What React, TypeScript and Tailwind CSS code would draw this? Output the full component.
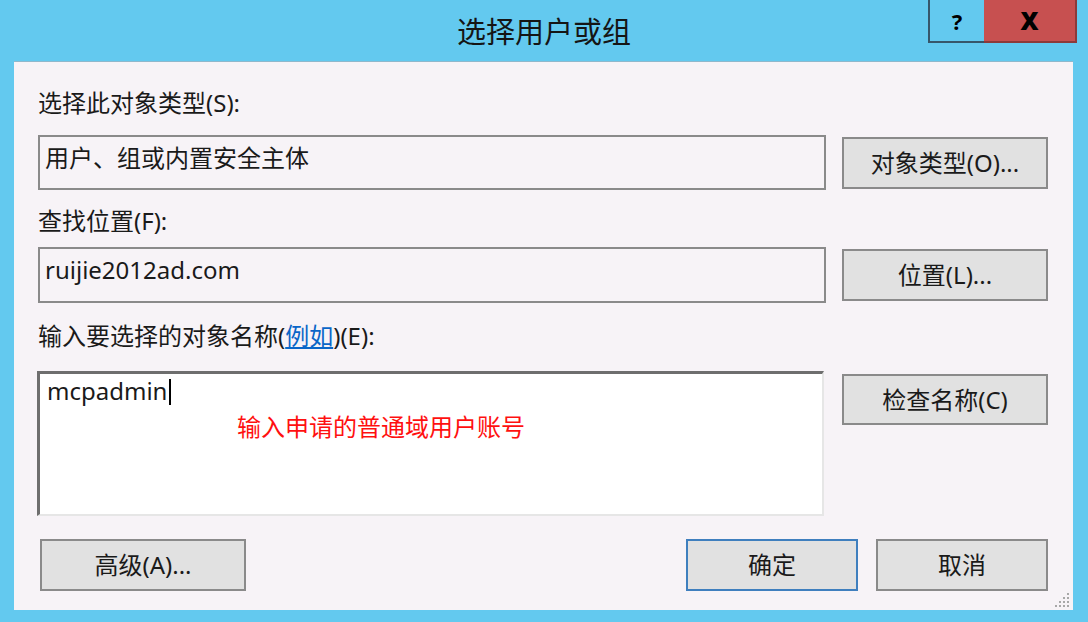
import React from "react";

const font = { fontFamily: '"Noto Sans", "Noto Sans CJK SC", sans-serif' };

function Btn({ children, primary = false, className = "" }: { children: React.ReactNode; primary?: boolean; className?: string }) {
  return (
    <div
      className={
        "flex items-center justify-center bg-[#e1e1e1] text-[24px] text-[#1a1a1a] border-2 " +
        (primary ? "border-[#3f7fbe] " : "border-[#8a8a8a] ") +
        className
      }
    >
      {children}
    </div>
  );
}

export default function App() {
  return (
    <div className="w-[1088px] h-[622px] bg-[#63c9ef] flex flex-col overflow-hidden" style={font}>
      {/* title bar */}
      <div className="relative h-[61px] shrink-0 flex items-center justify-center">
        <div className="text-[29px] text-[#151515] leading-none mt-[2px]">选择用户或组</div>
        <div className="absolute top-0 right-[11px] flex">
          <div className="w-[56px] h-[43px] border-l-2 border-b-2 border-[#36566a] flex items-center justify-center text-[22px] font-bold text-black leading-none">?</div>
          <div className="w-[93px] h-[43px] bg-[#c75050] border-r-2 border-b-2 border-[#8c3a3a] flex items-center justify-center text-[25px] font-black text-black leading-none">X</div>
        </div>
      </div>
      {/* client area */}
      <div className="relative ml-[14px] mr-[15px] h-[549px] bg-[#f7f3f7] border-t border-[#8fb8cc] pl-[24px] pr-[25px]">
        <div className="flex flex-col">
          <div className="mt-[27px] h-[28px] leading-[28px] text-[24px] text-[#1a1a1a]">选择此对象类型(S):</div>
          <div className="mt-[18px] flex gap-[16px] items-start">
            <div className="w-[788px] h-[55px] border-2 border-[#8a8a8a] bg-[#f7f3f7] px-[5px] pt-[6px] text-[24px] leading-[30px] text-[#1a1a1a]">
              用户、组或内置安全主体
            </div>
            <Btn className="mt-[2px] w-[206px] h-[52px]">对象类型(O)...</Btn>
          </div>
          <div className="mt-[17px] h-[28px] leading-[28px] text-[24px] text-[#1a1a1a]">查找位置(F):</div>
          <div className="mt-[12px] flex gap-[16px] items-start">
            <div className="w-[788px] h-[56px] border-2 border-[#8a8a8a] bg-[#f7f3f7] px-[5px] pt-[6px] text-[24px] leading-[30px] text-[#1a1a1a]">
              ruijie2012ad.com
            </div>
            <Btn className="mt-[2px] w-[206px] h-[52px]">位置(L)...</Btn>
          </div>
          <div className="mt-[19px] h-[28px] leading-[28px] text-[24px] text-[#1a1a1a]">
            输入要选择的对象名称(<span className="text-[#0a66c8] underline">例如</span>)(E):
          </div>
          <div className="mt-[21px] flex gap-[18px] items-start">
            <div className="relative w-[787px] h-[145px] -ml-[1px] bg-white border-t-[3px] border-l-[3px] border-r-2 border-b-2 border-t-[#6e6e6e] border-l-[#6e6e6e] border-r-[#e6e6e6] border-b-[#e6e6e6] pl-[7px] pt-[2px] text-[24px] leading-[30px] text-[#1a1a1a]">
              <span>mcpadmin</span>
              <span className="inline-block w-[2px] h-[26px] bg-black align-middle ml-[2px] -mt-[4px]"></span>
              <div className="absolute left-[197px] top-[38px] text-[24px] leading-[30px] text-[#ff1010]">输入申请的普通域用户账号</div>
            </div>
            <Btn className="mt-[3px] w-[206px] h-[51px]">检查名称(C)</Btn>
          </div>
          <div className="mt-[23px] flex items-start">
            <Btn className="ml-[2px] w-[206px] h-[52px]">高级(A)...</Btn>
            <div className="flex-1" />
            <Btn primary className="w-[172px] h-[52px]">确定</Btn>
            <Btn className="ml-[18px] w-[172px] h-[52px]">取消</Btn>
          </div>
        </div>
        {/* resize grip */}
        <svg className="absolute right-[3px] bottom-[3px]" width="16" height="16" viewBox="0 0 16 16">
          {[
            [13, 2],
            [9, 6], [13, 6],
            [5, 10], [9, 10], [13, 10],
            [1, 14], [5, 14], [9, 14], [13, 14],
          ].map(([x, y], i) => (
            <rect key={i} x={x} y={y} width="2" height="2" fill="#a8a8a8" />
          ))}
        </svg>
      </div>
    </div>
  );
}
